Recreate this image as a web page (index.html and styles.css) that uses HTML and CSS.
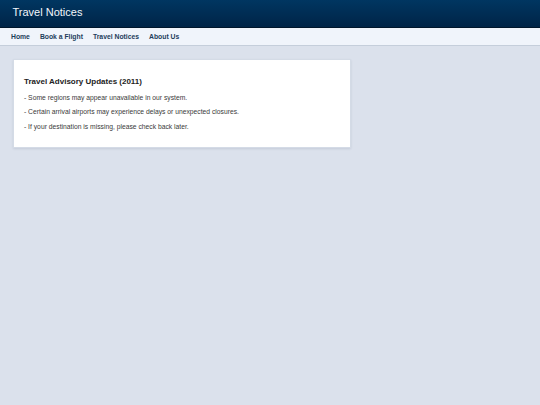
FILE: index.html
```html
<!DOCTYPE html>
<html lang="en">
<head>
<meta charset="utf-8">
<title>Travel Notices</title>
<link rel="stylesheet" href="styles.css">
</head>
<body>
<header class="topbar">
  <h1 class="site-title">Travel Notices</h1>
</header>
<nav class="mainnav">
  <a href="#">Home</a>
  <a href="#">Book a Flight</a>
  <a href="#">Travel Notices</a>
  <a href="#">About Us</a>
</nav>
<main class="content">
  <section class="card">
    <h2 class="card-title">Travel Advisory Updates (2011)</h2>
    <p>- Some regions may appear unavailable in our system.</p>
    <p>- Certain arrival airports may experience delays or unexpected closures.</p>
    <p>- If your destination is missing, please check back later.</p>
  </section>
</main>
</body>
</html>
```
FILE: styles.css
```css
html, body {
  margin: 0;
  padding: 0;
}
body {
  background: #dbe1ec;
  font-family: "Liberation Sans", Arial, sans-serif;
  min-height: 405px;
}
.topbar {
  height: 27px;
  background: linear-gradient(to bottom, #003661 0%, #002447 100%);
  border-bottom: 1px solid #00162c;
  display: flex;
  align-items: center;
  padding: 0 12.5px;
}
.site-title {
  margin: 0;
  font-size: 11px;
  font-weight: normal;
  color: #f2f6fb;
  line-height: 1;
  position: relative;
  top: -1px;
}
.mainnav {
  height: 17px;
  background: #f0f4fb;
  border-bottom: 1px solid #c5cedb;
  display: flex;
  align-items: center;
  gap: 10px;
  padding: 0 11px;
}
.mainnav a {
  font-size: 6.8px;
  font-weight: bold;
  color: #1e3d5c;
  text-decoration: none;
  line-height: 1;
  position: relative;
  top: 0.5px;
}
.content {
  padding: 13px 12.5px;
}
.card {
  box-sizing: border-box;
  width: 338px;
  background: #ffffff;
  border: 1px solid #d4dbe6;
  box-shadow: 0 1px 2px rgba(40, 60, 90, 0.12);
  padding: 16.4px 10.5px 12.8px;
}
.card-title {
  margin: 0 0 2.4px;
  font-size: 8px;
  line-height: 12px;
  font-weight: bold;
  color: #222222;
}
.card p {
  margin: 0;
  font-size: 6.75px;
  line-height: 14.5px;
  color: #3a3a3a;
}
```
